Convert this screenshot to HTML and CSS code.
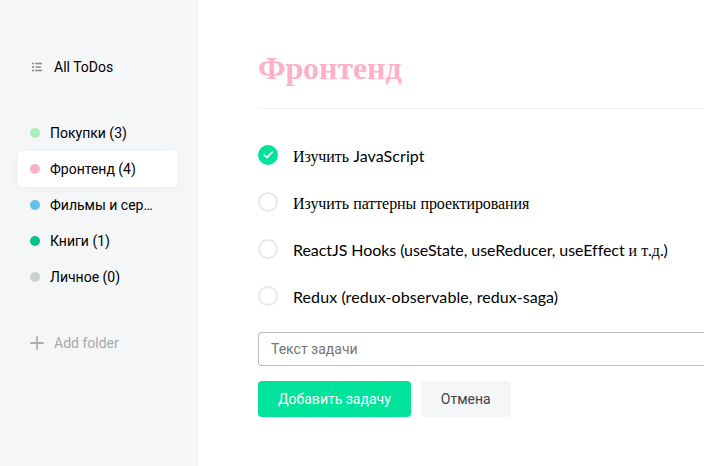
FILE: index.html
```html
<!DOCTYPE html>
<html lang="ru">
<head>
<meta charset="utf-8">
<title>ToDo</title>
<link rel="stylesheet" href="styles.css">
</head>
<body>
<div class="todo">
  <aside class="sidebar">
    <div class="all"><svg width="14" height="12" viewBox="0 0 14 12" fill="none" stroke="#8b8c8e" stroke-width="1.3"><path d="M5 2.5H12M6 6H11M5 9.5H12M2 2.5h2M2 6h2.4M2 9.5h2"/></svg><span>All ToDos</span></div>
    <ul class="folders">
      <li><i class="dot lime"></i><span>Покупки (3)</span></li>
      <li class="active"><i class="dot pink"></i><span>Фронтенд (4)</span></li>
      <li><i class="dot blue"></i><span>Фильмы и сер…</span></li>
      <li><i class="dot green"></i><span>Книги (1)</span></li>
      <li><i class="dot grey"></i><span>Личное (0)</span></li>
    </ul>
    <div class="add"><svg width="14" height="14" viewBox="0 0 14 14" fill="none" stroke="#adaeaf" stroke-width="1.8" stroke-linecap="round"><path d="M7 1v12M1 7h12"/></svg><span>Add folder</span></div>
  </aside>
  <main class="tasks">
    <h2>Фронтенд</h2>
    <div class="row"><span class="check done"><svg width="11" height="8" viewBox="0 0 11 8" fill="none" stroke="#fff" stroke-width="1.7" stroke-linecap="round" stroke-linejoin="round"><path d="M9.3 1.2L3.9 6.6L1.4 4.1"/></svg></span><p><span class="cyr">Изучить</span> JavaScript</p></div>
    <div class="row"><span class="check"></span><p><span class="cyr">Изучить</span> <span class="cyr">паттерны</span> <span class="cyr">проектирования</span></p></div>
    <div class="row"><span class="check"></span><p class="tight">ReactJS Hooks (useState, useReducer, useEffect <span class="cyr">и</span> <span class="cyr">т</span>.<span class="cyr">д</span>.)</p></div>
    <div class="row"><span class="check"></span><p>Redux (redux-observable, redux-saga)</p></div>
    <form class="form">
      <input type="text" placeholder="Текст задачи">
      <div class="buttons"><button type="button" class="primary">Добавить задачу</button><button type="button" class="cancel">Отмена</button></div>
    </form>
  </main>
</div>
</body>
</html>
```
FILE: styles.css
```css
* { box-sizing: border-box; margin: 0; padding: 0; }
body { font-family: Roboto, sans-serif; font-size: 14px; background: #fff; color: #000; }
.todo { display: flex; height: 466px; }
.sidebar { width: 198px; flex: none; background: #f4f6f8; border-right: 1px solid #f0f2f4; padding: 49px 20px 0 18px; }
.all, .add, .folders li { display: flex; align-items: center; height: 36px; padding: 0 12px; }
.all svg, .add svg { margin-right: 10px; flex: none; }
.folders { list-style: none; margin: 30px 0; }
.folders li.active { background: #fff; border-radius: 4px; box-shadow: 0 2px 10px rgba(0,0,0,.04); }
.folders span { white-space: nowrap; }
.dot { width: 10px; height: 10px; border-radius: 50%; margin-right: 10px; flex: none; }
.lime { background: #aaeebb; }
.pink { background: #ffb0c9; }
.blue { background: #64c1ee; }
.green { background: #00c484; }
.grey { background: #c9d1d3; }
.add { color: #a8a9aa; }
.tasks { flex: 1; min-width: 0; padding: 49px 0 0 60px; }
h2 { font: 700 32px/39px "Liberation Serif", serif; letter-spacing: -.1px; color: #ffb0c9; padding-bottom: 20px; border-bottom: 1px solid #f2f2f2; margin-bottom: 36px; }
.row { display: flex; align-items: center; height: 20px; margin-bottom: 27px; }
.row p { font: 16px/20px Lato, sans-serif; letter-spacing: .08px; font-variant-ligatures: common-ligatures; margin: 2px 0 0 15px; white-space: nowrap; }
.row p.tight { letter-spacing: -.06px; }
.cyr { font-family: "Liberation Serif", serif; letter-spacing: -.07px; }
.check { width: 20px; height: 20px; border: 2px solid #e8e8e8; border-radius: 50%; display: flex; align-items: center; justify-content: center; }
.check.done { background: #00e39a; border-color: #00e39a; }
.form { margin-top: -1px; }
.form input { display: block; width: 100%; height: 34px; border: 1px solid #bbb; border-right: 0; border-radius: 4px 0 0 4px; padding: 0 12px; font: 14px Roboto, sans-serif; }
.buttons { display: flex; gap: 10px; margin-top: 15px; }
button { border: 0; border-radius: 4px; height: 36px; padding: 0 20px; font: 14px Roboto, sans-serif; }
.primary { background: #00e39a; color: #fff; }
.cancel { background: #f4f6f8; color: #444; }
```
